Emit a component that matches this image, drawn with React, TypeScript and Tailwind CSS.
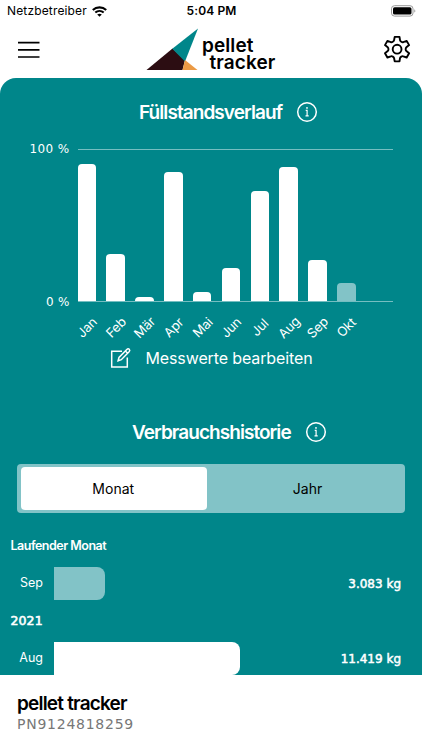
import React from "react";

const months = [
  { name: "Jan", height: 137 },
  { name: "Feb", height: 47 },
  { name: "Mär", height: 4 },
  { name: "Apr", height: 129 },
  { name: "Mai", height: 9 },
  { name: "Jun", height: 33 },
  { name: "Jul", height: 109.5 },
  { name: "Aug", height: 134 },
  { name: "Sep", height: 41 },
  { name: "Okt", height: 18, current: true },
];

function InfoIcon() {
  return (
    <svg width="22" height="22" viewBox="0 0 22 22" fill="none" stroke="white" className="shrink-0">
      <circle cx="11" cy="11" r="9.3" strokeWidth="1.5" />
      <path d="M9.7 9.3H11.1V14.7M9.5 14.8H12.7" strokeWidth="1.2" />
      <circle cx="11" cy="6.9" r="0.9" fill="white" stroke="none" />
    </svg>
  );
}

function StatusBar() {
  return (
    <div className="grid h-[22px] grid-cols-3 items-center pl-[7px] pr-[6px]">
      <div className="flex items-center gap-[5px]">
        <span className="text-[12px] leading-none tracking-[0.15px]">Netzbetreiber</span>
        <svg width="15" height="11" viewBox="0 0 15 11" fill="none" stroke="black">
          <path d="M0.8 4.1C4.6 0.5 10.4 0.5 14.2 4.1" strokeWidth="2.1" />
          <path d="M3.3 6.6C5.7 4.4 9.3 4.4 11.7 6.6" strokeWidth="2" />
          <path d="M7.5 10.8L5.2 8.6C6.5 7.5 8.5 7.5 9.8 8.6Z" fill="black" stroke="none" />
        </svg>
      </div>
      <span className="text-center text-[12px] leading-none font-semibold tracking-[0.1px]">5:04 PM</span>
      <svg width="26" height="12" viewBox="0 0 26 12" className="justify-self-end">
        <rect x="1.5" y="0.7" width="21.5" height="10.4" rx="3" fill="white" stroke="#999" strokeWidth="1" />
        <rect x="3" y="2.2" width="18.5" height="7.4" rx="1.6" fill="black" />
        <path d="M24.3 4.2C25.7 4.8 25.7 7 24.3 7.6Z" fill="#999" />
      </svg>
    </div>
  );
}

function Header() {
  return (
    <div className="flex h-14 items-start pl-[18px] pr-[11px]">
      <svg width="22" height="18" viewBox="0 0 22 18" stroke="black" strokeWidth="1.7" className="mt-[19px]">
        <path d="M0 1.6H21.5M0 8.8H21.5M0 16H21.5" />
      </svg>
      <div className="mt-[6px] ml-[105.5px] flex">
        <svg width="53" height="43" viewBox="0 0 53 43">
          <path d="M0.5 42L26.5 20.5L39 32L36.5 42Z" fill="#2c0d12" />
          <path d="M26.3 20.7L52 0.5L39 33.5Z" fill="#00868a" />
          <path d="M36.5 42L39 32L51.5 42Z" fill="#eb9a45" />
        </svg>
        <div className="mt-[9px] ml-[3.5px] text-[19px] font-semibold tracking-[0.1px]">
          <div className="h-[17px] leading-[17px]">pellet</div>
          <div className="h-[17px] pl-[7.5px] leading-[17px]">tracker</div>
        </div>
      </div>
      <svg width="28" height="28" viewBox="0 0 28 28" fill="none" stroke="black" strokeWidth="1.9" strokeLinejoin="round" className="mt-[13px] ml-auto">
        <path d="M11.7 1.9H16.5L17 5.2C17.2 6.4 19.1 7.6 20.3 7.1L23.7 5.9L26.1 10.1L23.4 12.3C22.4 13.2 22.4 15.2 23.4 16.1L26.1 18.3L23.7 22.5L20.3 21.3C19.1 20.8 17.2 22 17 23.2L16.5 26.4H11.7L11.1 23.2C10.9 22 9 20.8 7.8 21.3L4.4 22.5L2 18.3L4.7 16.1C5.7 15.2 5.7 13.2 4.7 12.3L2 10.1L4.4 5.9L7.8 7.1C9 7.6 10.9 6.4 11.1 5.2Z" />
        <circle cx="14.1" cy="14.2" r="4.4" />
      </svg>
    </div>
  );
}

function LevelChart() {
  return (
    <div>
      <div className="flex h-[153px] pl-[25px] pr-[29px]">
        <div className="flex w-[52.5px] flex-col justify-between pr-[8px] text-right font-['DejaVu_Sans',sans-serif] text-[12px] leading-none whitespace-nowrap">
          <span className="-mt-[6px] tracking-[0.4px]">100 %</span>
          <span className="-mb-[6px] tracking-[0.2px]">0 %</span>
        </div>
        <div className="flex flex-1 items-end gap-[10.35px] border-y border-[#75bec1]">
          {months.map((m) => (
            <div
              key={m.name}
              className={m.current ? "w-[18.5px] rounded-t-[4px] bg-[#82c3c7]" : "w-[18.5px] rounded-t-[4px] bg-white"}
              style={{ height: m.height }}
            />
          ))}
        </div>
      </div>
      <div className="mt-[15.5px] ml-[73px] flex h-[20px] items-center">
        {months.map((m) => (
          <div key={m.name} className="flex w-[28.8px] justify-center text-[13px] leading-none tracking-[-0.2px]">
            <span className="-rotate-45">{m.name}</span>
          </div>
        ))}
      </div>
    </div>
  );
}

function UsageRow({ label, width, amount, current }: { label: string; width: number; amount: string; current?: boolean }) {
  return (
    <div className="flex h-[33px] items-center pr-[21px]">
      <span className="w-[54px] pr-[11px] text-right text-[12.5px] leading-none">{label}</span>
      <div
        className={current ? "h-[33px] rounded-r-[8px] bg-[#82c3c7]" : "h-[33px] rounded-r-[8px] bg-white"}
        style={{ width }}
      />
      <span className="ml-auto font-['DejaVu_Sans',sans-serif] text-[12px] leading-none [-webkit-text-stroke:0.5px_white]">
        {amount}
      </span>
    </div>
  );
}

export default function App() {
  return (
    <div className="flex h-[750px] w-[422px] flex-col overflow-hidden bg-white font-[Inter,sans-serif] text-black">
      <StatusBar />
      <Header />
      <main className="h-[597px] overflow-hidden rounded-t-[16px] bg-[#00868a] text-white">
        <div className="mt-[23px] flex h-[22px] items-center pl-[139px]">
          <h2 className="w-[157px] text-[19px] leading-none font-semibold tracking-[-0.93px]">Füllstandsverlauf</h2>
          <InfoIcon />
        </div>
        <div className="h-[25.5px]" />
        <LevelChart />
        <div className="mt-[10px] flex h-[22px] items-center pl-[110px]">
          <svg width="22" height="22" viewBox="0 0 22 22" fill="none" stroke="white" strokeWidth="1.5" className="mr-[13.5px]">
            <path d="M12 4.3H1.7V20H17.3V10.5" />
            <path d="M8.1 13.8L9 10.4L16.8 2.5C18.6 0.8 20.8 3 19.1 4.8L11.3 12.7ZM15.4 4L17.7 6.2" />
          </svg>
          <span className="text-[16px] leading-none tracking-[-0.12px]">Messwerte bearbeiten</span>
        </div>
        <div className="mt-[52px] flex h-[22px] items-center pl-[132px]">
          <h2 className="w-[173px] text-[19px] leading-none font-semibold tracking-[-0.95px]">Verbrauchshistorie</h2>
          <InfoIcon />
        </div>
        <div className="mr-[17px] ml-[16.5px] mt-[21px] flex h-[49px] rounded-[4px] bg-[#82c3c7] p-[3px] pl-[4px] text-[14px] text-black">
          <div className="flex w-[186.5px] items-center justify-center rounded-[4px] bg-white pr-[1px] pb-[1px]">Monat</div>
          <div className="flex flex-1 items-center justify-center pb-[1px] pl-[6px]">Jahr</div>
        </div>
        <div className="mt-[26px] mb-[14px] pl-[10.5px] text-[12.5px] leading-[14px] font-semibold tracking-[-0.5px]">Laufender Monat</div>
        <UsageRow label="Sep" width={50.5} amount="3.083 kg" current />
        <div className="mt-[14px] mb-[14px] pl-[10.5px] font-['DejaVu_Sans',sans-serif] text-[12.5px] leading-[14px] tracking-[0.1px] [-webkit-text-stroke:0.6px_white]">2021</div>
        <UsageRow label="Aug" width={186} amount="11.419 kg" />
      </main>
      <footer className="flex-1 pt-[18px] pl-[17px]">
        <div className="text-[19px] leading-[22px] font-semibold tracking-[-0.8px]">pellet tracker</div>
        <div className="font-['DejaVu_Sans',sans-serif] text-[14px] leading-[18px] tracking-[0.75px] text-[#777]">PN9124818259</div>
      </footer>
    </div>
  );
}
